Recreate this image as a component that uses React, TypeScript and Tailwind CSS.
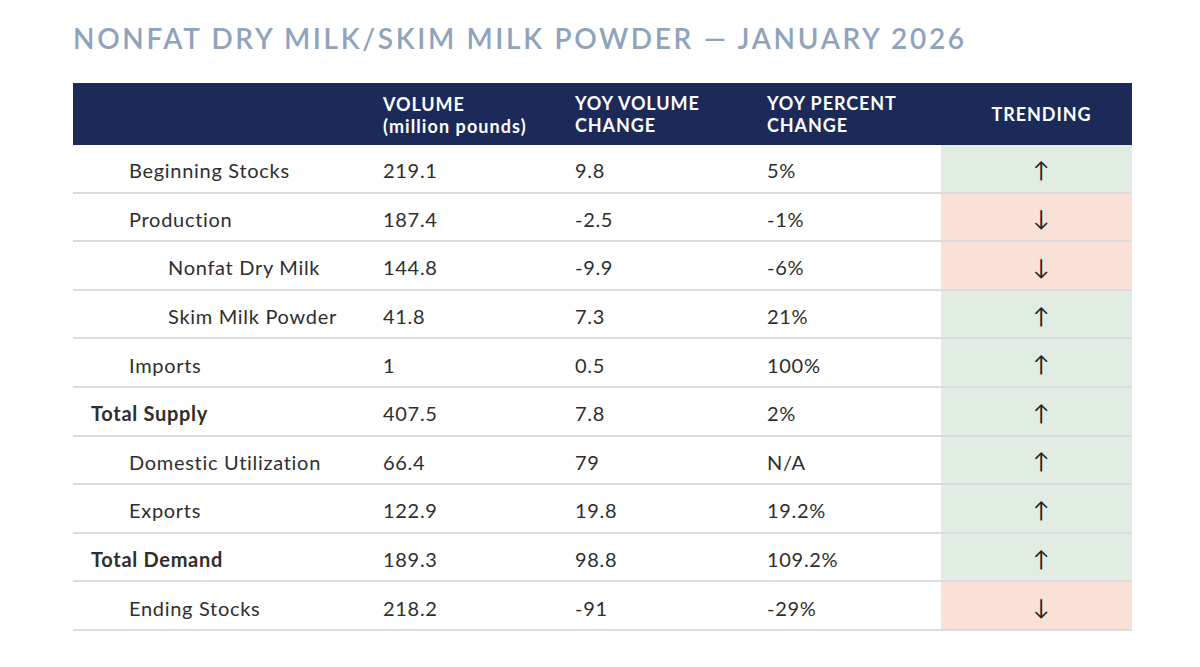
const rows = [
  { label: "Beginning Stocks", level: 1, vol: "219.1", chg: "9.8", pct: "5%", up: true },
  { label: "Production", level: 1, vol: "187.4", chg: "-2.5", pct: "-1%", up: false },
  { label: "Nonfat Dry Milk", level: 2, vol: "144.8", chg: "-9.9", pct: "-6%", up: false },
  { label: "Skim Milk Powder", level: 2, vol: "41.8", chg: "7.3", pct: "21%", up: true },
  { label: "Imports", level: 1, vol: "1", chg: "0.5", pct: "100%", up: true },
  { label: "Total Supply", level: 0, vol: "407.5", chg: "7.8", pct: "2%", up: true },
  { label: "Domestic Utilization", level: 1, vol: "66.4", chg: "79", pct: "N/A", up: true },
  { label: "Exports", level: 1, vol: "122.9", chg: "19.8", pct: "19.2%", up: true },
  { label: "Total Demand", level: 0, vol: "189.3", chg: "98.8", pct: "109.2%", up: true },
  { label: "Ending Stocks", level: 1, vol: "218.2", chg: "-91", pct: "-29%", up: false },
];

const indent: Record<number, string> = {
  0: "pl-[18px] font-bold",
  1: "pl-[56px]",
  2: "pl-[95px]",
};

const cols = "grid grid-cols-[297px_192px_192px_187px_191px]";

export default function App() {
  return (
    <div className="min-h-[667px] w-[1200px] bg-white font-['Lato',sans-serif] text-[#2e2e2e]">
      <div className="pl-[73px] pt-[21px]">
        <h1 className="text-[28px] font-semibold leading-[34px] tracking-[0.095em] text-[#90a3bc]">
          NONFAT DRY MILK/SKIM MILK POWDER — JANUARY 2026
        </h1>

        <div className="mt-[28px] w-[1059px]">
          <div className={`${cols} h-[62px] bg-[#1b2a59] text-[18px] font-bold uppercase leading-[22px] tracking-[0.05em] text-white`}>
            <div />
            <div className="flex flex-col justify-center pl-[13px] pt-[2px]">
              <span>Volume</span>
              <span className="normal-case tracking-[0.06em]">(million pounds)</span>
            </div>
            <div className="flex flex-col justify-center pl-[13px]">
              <span>YOY Volume</span>
              <span>Change</span>
            </div>
            <div className="flex flex-col justify-center pl-[13px]">
              <span>YOY Percent</span>
              <span>Change</span>
            </div>
            <div className="flex items-center justify-center pl-[10px]">Trending</div>
          </div>

          {rows.map((r) => (
            <div
              key={r.label}
              className={`${cols} h-[48.6px] border-b-2 border-[#dcdcdc] text-[20px] tracking-[0.035em]`}
            >
              <div className={`flex items-center pt-[4px] ${indent[r.level]}`}>{r.label}</div>
              <div className="flex items-center pl-[13px] pt-[4px]">{r.vol}</div>
              <div className="flex items-center pl-[13px] pt-[4px]">{r.chg}</div>
              <div className="flex items-center pl-[13px] pt-[4px]">{r.pct}</div>
              <div
                className={`flex items-center justify-center pl-[10px] pt-[2px] text-[22px] text-[#222] ${
                  r.up ? "bg-[#e1ede3]" : "bg-[#f9e1d7]"
                }`}
              >
                {r.up ? "↑" : "↓"}
              </div>
            </div>
          ))}
        </div>
      </div>
    </div>
  );
}
